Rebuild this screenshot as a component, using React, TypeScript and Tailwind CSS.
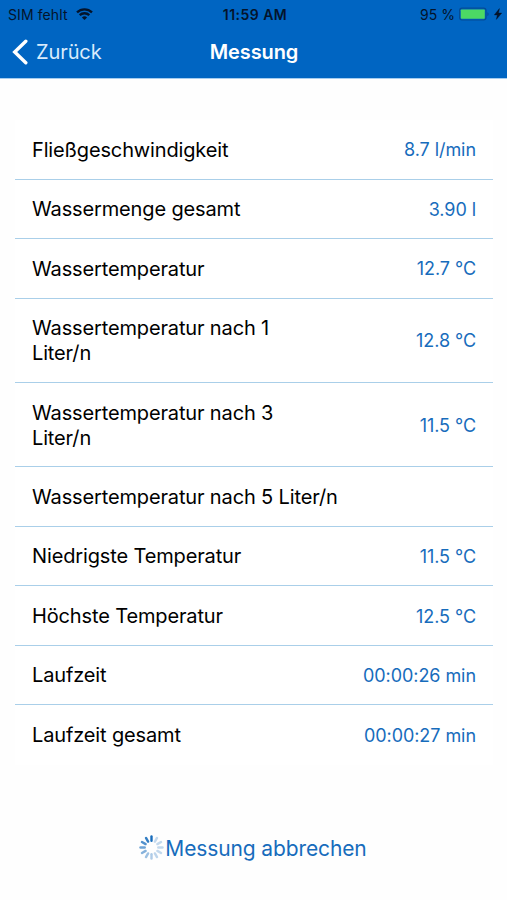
import React from 'react';

interface Reading {
  label: string;
  value?: string;
  wrap?: boolean;
}

const readings: Reading[] = [
  { label: 'Fließgeschwindigkeit', value: '8.7 l/min' },
  { label: 'Wassermenge gesamt', value: '3.90 l' },
  { label: 'Wassertemperatur', value: '12.7 °C' },
  { label: 'Wassertemperatur nach 1 Liter/n', value: '12.8 °C', wrap: true },
  { label: 'Wassertemperatur nach 3 Liter/n', value: '11.5 °C', wrap: true },
  { label: 'Wassertemperatur nach 5 Liter/n' },
  { label: 'Niedrigste Temperatur', value: '11.5 °C' },
  { label: 'Höchste Temperatur', value: '12.5 °C' },
  { label: 'Laufzeit', value: '00:00:26 min' },
  { label: 'Laufzeit gesamt', value: '00:00:27 min' },
];

// Opacity of each spoke, clockwise from the top
const spokes = [1, 0.25, 0.25, 0.25, 0.25, 0.28, 0.34, 0.42, 0.52, 0.62, 0.74, 0.88];

const Spinner = () => (
  <svg className="w-[25px] h-[25px] shrink-0 mb-[3px]" viewBox="-12.5 -12.5 25 25">
    {spokes.map((opacity, i) => (
      <line
        key={i}
        y1="-6.8"
        y2="-11"
        stroke="#176cbc"
        strokeWidth="2.4"
        strokeLinecap="round"
        opacity={opacity}
        transform={`rotate(${i * 30})`}
      />
    ))}
  </svg>
);

const WifiIcon = () => (
  <svg className="w-[17px] h-[12px] mb-px" viewBox="0 0 17 12" fill="none" stroke="#04142b" strokeWidth="2.3">
    <path d="M1 4.4a10.8 10.8 0 0 1 15 0" />
    <path d="M3.7 7.2a6.9 6.9 0 0 1 9.6 0" />
    <path d="M8.5 12 5.9 9.4a3.8 3.8 0 0 1 5.2 0z" fill="#04142b" stroke="none" />
  </svg>
);

const StatusBar = () => (
  <div className="grid grid-cols-[1fr_auto_1fr] items-center h-[28px] pl-2 pr-[5px] text-[14px] text-[#04142b]">
    <div className="flex items-center gap-2">
      <span className="tracking-[0.1px]">SIM fehlt</span>
      <WifiIcon />
    </div>
    <span className="font-semibold text-[14px] tracking-[0.45px]">11:59 AM</span>
    <div className="flex items-center justify-end">
      <span>95 %</span>
      <svg className="w-[32px] h-[14px] ml-1 mb-px" viewBox="0 0 32 14">
        <rect x="0.6" y="1.2" width="26.4" height="11.8" rx="2.4" fill="none" stroke="#044c96" strokeWidth="1.2" />
        <rect x="1.8" y="2.4" width="24" height="9.4" rx="0.8" fill="#4cd964" />
        <path d="M28.4 5.2c1.6.4 1.6 3.4 0 3.8z" fill="#044c96" />
      </svg>
      <svg className="w-[8px] h-[12px] ml-[3px] mb-px" viewBox="0 0 8 12">
        <path d="M5.4 0.6 0.3 6.9h3L2.4 11.4 7.7 5.1H4.5z" fill="#04142b" stroke="#04142b" strokeWidth="0.4" />
      </svg>
    </div>
  </div>
);

export default function App() {
  return (
    <div className="flex flex-col h-[900px] bg-[#fefefe] font-['Inter',sans-serif] text-black">
      {/* Header */}
      <header className="h-[79px] bg-[#0065c2] border-b border-[#a5cdf0]">
        <StatusBar />
        <div className="grid grid-cols-[1fr_auto_1fr] items-center h-[47px] pl-3 pr-[11px] text-white">
          <button className="flex items-center gap-2 text-left text-[20px] tracking-[-0.1px] text-[#d9ebfc]">
            <svg className="w-[16px] h-[26px]" viewBox="0 0 16 26" fill="none" stroke="white" strokeWidth="3.4" strokeLinecap="round">
              <path d="M13.8 2.2 2.7 13l11.1 10.8" />
            </svg>
            Zurück
          </button>
          <h1 className="text-[20px] font-semibold tracking-[-0.1px]">Messung</h1>
        </div>
      </header>

      {/* Readings */}
      <div className="mt-[41px] ml-[15px] mr-[14px] bg-white">
        {readings.map((reading) => (
          <div
            key={reading.label}
            className={`flex items-center justify-between px-[17px] border-b border-[#aacfe9] last:border-b-0 ${
              reading.wrap ? 'h-[84.4px]' : 'h-[59.45px] first:h-[59.8px]'
            }`}
          >
            <span className={`pt-[1.5px] text-[20px] leading-[25px] tracking-[-0.14px] ${reading.wrap ? 'w-[260px]' : ''}`}>
              {reading.label}
            </span>
            <span className="pt-px text-[18px] leading-[25px] tracking-[-0.06px] text-[#176cbc]">{reading.value}</span>
          </div>
        ))}
      </div>

      {/* Cancel */}
      <button className="flex items-center justify-center mt-[67px] h-[34px] pr-px text-[21px] tracking-[-0.12px] text-[#176cbc]">
        <Spinner />
        <span className="ml-px">Messung abbrechen</span>
      </button>
    </div>
  );
}
